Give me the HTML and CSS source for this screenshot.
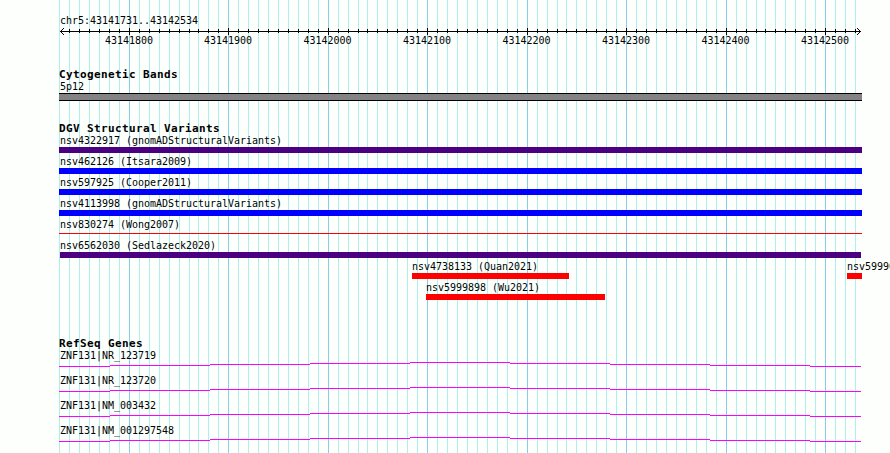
FILE: index.html
```
<!DOCTYPE html>
<html lang="en">

<head>
    <meta charset="UTF-8">
    <meta name="viewport" content="width=device-width, initial-scale=1.0">
    <title>chr5:43141731..43142534</title>
    <link rel="stylesheet" href="styles.css">
</head>

<body>
    <div class="browser">
        <svg class="grid" id="grid" width="890" height="453" shape-rendering="crispEdges"></svg>

        <div class="ruler">
            <div class="region">chr5:43141731..43142534</div>
            <svg class="axis" id="axis" width="803" height="8" shape-rendering="crispEdges"></svg>
            <div class="positions">
                <span>43141800</span>
                <span>43141900</span>
                <span>43142000</span>
                <span>43142100</span>
                <span>43142200</span>
                <span>43142300</span>
                <span>43142400</span>
                <span>43142500</span>
            </div>
        </div>

        <div class="bands">
            <h3>Cytogenetic Bands</h3>
            <div class="label">5p12</div>
            <div class="band"></div>
        </div>

        <div class="variants">
            <h3>DGV Structural Variants</h3>
            <div class="row"><div class="label">nsv4322917 (gnomADStructuralVariants)</div><div class="bar indigo"></div></div>
            <div class="row"><div class="label">nsv462126 (Itsara2009)</div><div class="bar blue"></div></div>
            <div class="row"><div class="label">nsv597925 (Cooper2011)</div><div class="bar blue"></div></div>
            <div class="row"><div class="label">nsv4113998 (gnomADStructuralVariants)</div><div class="bar blue"></div></div>
            <div class="row"><div class="label">nsv830274 (Wong2007)</div><div class="bar thin"></div></div>
            <div class="row"><div class="label">nsv6562030 (Sedlazeck2020)</div><div class="bar indigo inset"></div></div>
            <div class="row split">
                <div class="quan"><div class="label">nsv4738133 (Quan2021)</div><div class="bar red"></div></div>
                <div class="edge"><div class="label">nsv59990</div><div class="bar red"></div></div>
            </div>
            <div class="row wu"><div class="label">nsv5999898 (Wu2021)</div><div class="bar red"></div></div>
        </div>

        <div class="genes">
            <h3>RefSeq Genes</h3>
            <div class="gene"><div class="label">ZNF131|NR_123719</div></div>
            <div class="gene"><div class="label">ZNF131|NR_123720</div></div>
            <div class="gene"><div class="label">ZNF131|NM_003432</div></div>
            <div class="gene"><div class="label">ZNF131|NM_001297548</div></div>
        </div>
    </div>
    <script>
        const major = [129, 228, 328, 427, 527, 626, 726, 825];
        // first line of each interval that sits 1px early, 10 = none
        const early = [7, 10, 4, 10, 4, 10, 4, 10];
        const minor = [];

        for (let x = 59; x < 129; x += 10) {
            minor.push(x);
        }
        for (let i = 0; i < major.length; i++) {
            for (let n = 1; n < 10; n++) {
                const x = major[i] + n * 10 - (n >= early[i] ? 1 : 0);
                if (x < 862) {
                    minor.push(x);
                }
            }
        }

        function lines(xs, top, height) {
            return xs.map(x => "M" + x + " " + top + "h1v" + height + "h-1z").join("");
        }

        document.getElementById("grid").innerHTML =
            '<path fill="#afeeee" d="' + lines(minor, 0, 453) + '"/>' +
            '<path fill="#87ceeb" d="' + lines(major, 0, 453) + '"/>';

        const shift = xs => xs.map(x => x - 59);
        document.getElementById("axis").innerHTML =
            '<path d="M1 4h801v1h-801z' + lines(shift(minor.slice(1)), 2, 4) + lines(shift(major), 1, 7) + '"/>' +
            '<path d="M2 3h1v3h-1zM3 2h1v1h-1zM3 6h1v1h-1zM4 1h1v1h-1zM4 7h1v1h-1z"/>' +
            '<path d="M800 3h1v3h-1zM799 2h1v1h-1zM799 6h1v1h-1zM798 1h1v1h-1zM798 7h1v1h-1z"/>';

        // intron arcs, drawn as 1px steps every 100px
        const genes = document.getElementsByClassName("gene");
        for (let i = 0; i < genes.length; i++) {
            genes[i].insertAdjacentHTML("beforeend",
                '<svg width="802" height="5" shape-rendering="crispEdges"><path fill="#ff00ff" d="' +
                'M0 4h51v1h-51zM51 3h100v1h-100zM151 2h100v1h-100zM251 1h100v1h-100zM351 0h100v1h-100z' +
                'M451 1h100v1h-100zM551 2h100v1h-100zM651 3h100v1h-100zM751 4h51v1h-51z"/></svg>');
        }
    </script>
</body>

</html>
```
FILE: styles.css
```
body {
    margin: 0;
    background-color: #fdfffc;
    color: #000;
    font-family: "DejaVu Sans Mono", monospace;
    font-size: 10px;
    line-height: 12px;
    letter-spacing: -0.02px;
}

.browser {
    position: relative;
    box-sizing: border-box;
    width: 890px;
    height: 453px;
    padding: 15px 0 0 59px;
    overflow: hidden;
}

.grid {
    position: absolute;
    left: 0;
    top: 0;
    z-index: -1;
}

svg {
    display: block;
}

.ruler {
    height: 53px;
}

.region {
    padding-left: 1px;
}

.positions {
    display: flex;
    width: 796px;
    padding-left: 20px;
}

.positions span {
    width: 99.5px;
    padding-left: 26px;
    box-sizing: border-box;
}

.positions span:first-child {
    width: 99px;
}

h3 {
    margin: 0;
    font-size: 11px;
    line-height: 13px;
    letter-spacing: 0.38px;
}

.label {
    height: 12px;
    padding-left: 1px;
    white-space: pre;
}

.bands {
    height: 54px;
}

.band {
    box-sizing: border-box;
    width: 803px;
    height: 8px;
    border-top: 1px solid #000;
    border-bottom: 1px solid #000;
    background-color: #848284;
}

.variants {
    height: 215px;
}

.row {
    width: 803px;
    height: 21px;
}

.bar {
    height: 6px;
}

.indigo {
    background-color: #4b0082;
}

.blue {
    background-color: #0000ff;
}

.red {
    background-color: #ff0000;
}

.thin {
    height: 1px;
    margin-top: 2px;
    background-color: #ff0000;
}

.inset {
    margin: 0 1px;
}

.split {
    display: flex;
    justify-content: space-between;
    box-sizing: border-box;
    padding-left: 353px;
}

.split .label {
    padding-left: 0;
}

.quan {
    width: 157px;
}

.edge {
    width: 15px;
}

.wu {
    width: 179px;
    margin-left: 367px;
}

.wu .label {
    padding-left: 0;
}

.gene {
    height: 25px;
}
```
